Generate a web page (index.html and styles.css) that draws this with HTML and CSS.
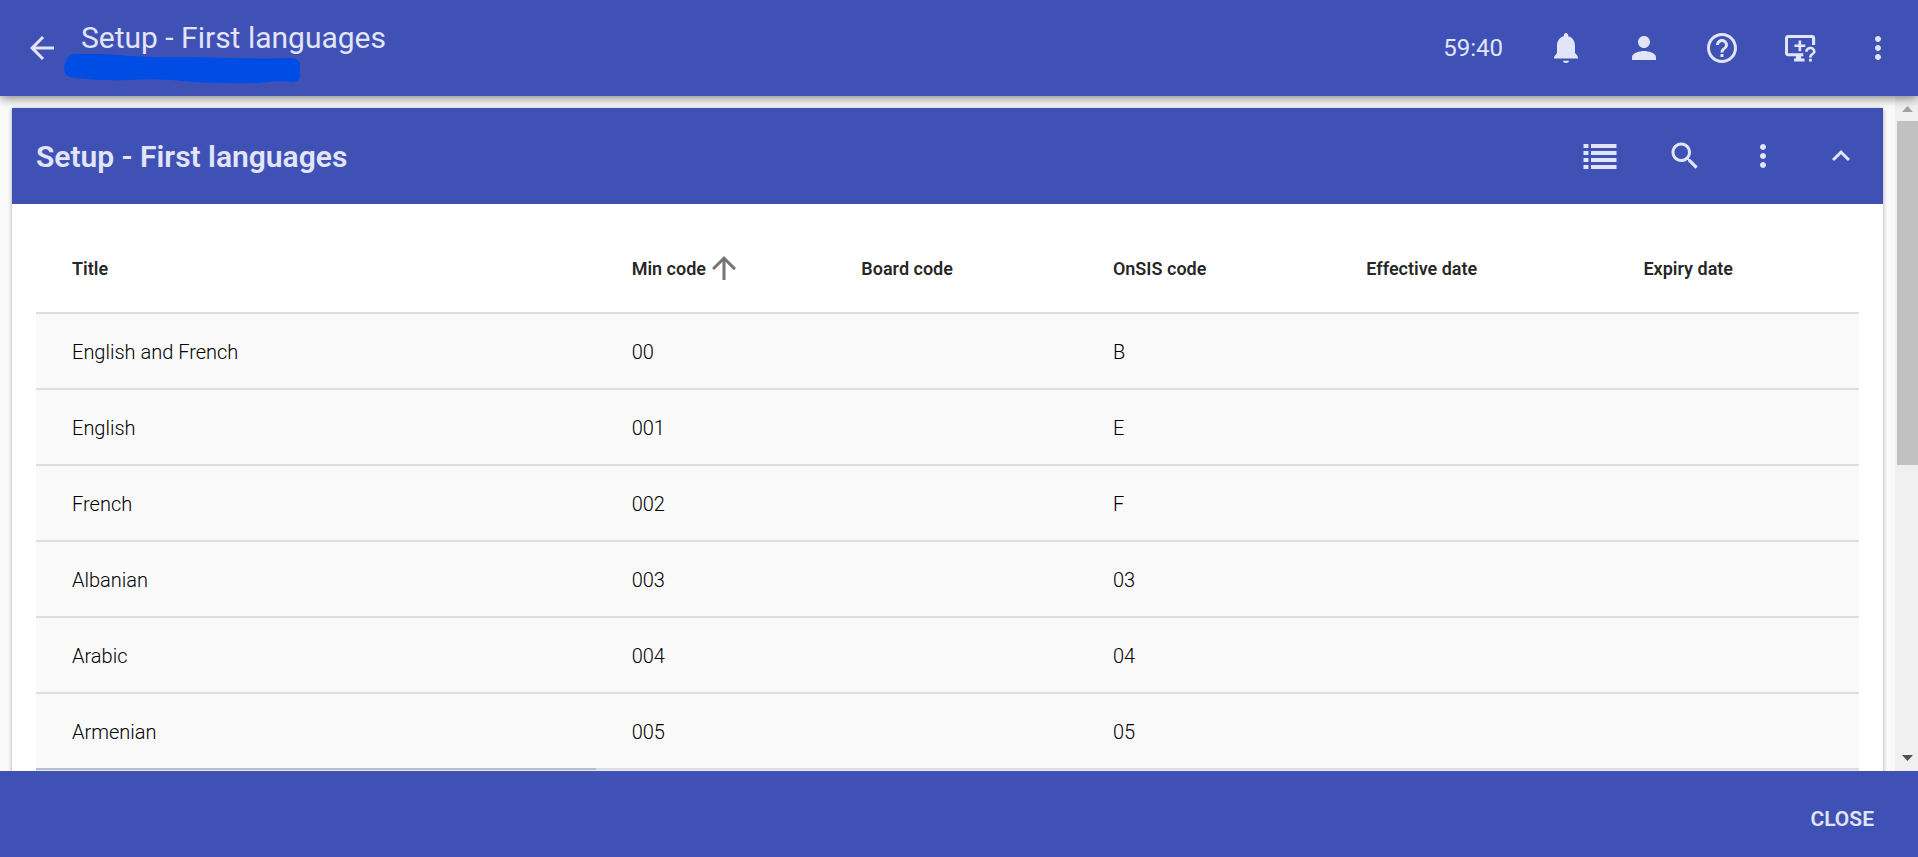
FILE: index.html
```html
<!DOCTYPE html>
<html lang="en">
<head>
<meta charset="utf-8">
<title>Setup - First languages</title>
<link rel="stylesheet" href="styles.css">
</head>
<body>
<header class="topbar">
  <button class="icon-btn" aria-label="Back"><svg viewBox="0 0 24 24"><path d="M20 11H7.83l5.59-5.59L12 4l-8 8 8 8 1.41-1.41L7.83 13H20z"/></svg></button>
  <div class="heading">
    <h1 class="page-title">Setup - First languages</h1>
    <svg class="marker" viewBox="0 0 238 30" aria-hidden="true"><path d="M10 0Q38-1 66 2Q100 4 130 3Q180 5 228 4Q236 5 236 12V21Q236 28 228 28Q212 26 196 29Q160 30 130 28Q96 24 66 26Q36 27 10 24Q0 23 0 14Q2 1 10 0z"/></svg>
  </div>
  <span class="timer">59:40</span>
  <nav class="actions" aria-label="Account">
    <button class="icon-btn" aria-label="Notifications"><svg viewBox="0 0 24 24"><path d="M12 22c1.100 0 2-.5 2-1.500h-4c0 1 .9 1.500 2 1.500zm7.500-4.500v-.5L18 15.300V10.500c0-3.100-1.600-5.600-4.500-6.300V3.500c0-.8-.7-1.500-1.500-1.500s-1.500.7-1.500 1.500v.7C7.600 4.900 6 7.400 6 10.500v4.800L4 18v1h16v-1z"/></svg></button>
    <button class="icon-btn" aria-label="Profile"><svg viewBox="0 0 24 24"><path d="M12 12c2.210 0 4-1.790 4-4s-1.790-4-4-4-4 1.790-4 4 1.790 4 4 4zm0 2c-2.670 0-8 1.340-8 4v2h16v-2c0-2.660-5.330-4-8-4z"/></svg></button>
    <button class="icon-btn" aria-label="Help"><svg viewBox="0 0 24 24"><path d="M11 18h2v-2h-2v2zm1-16C6.480 2 2 6.480 2 12s4.480 10 10 10 10-4.480 10-10S17.520 2 12 2zm0 18c-4.410 0-8-3.590-8-8s3.590-8 8-8 8 3.590 8 8-3.590 8-8 8zm0-14c-2.210 0-4 1.790-4 4h2c0-1.100.9-2 2-2s2 .9 2 2c0 2-3 1.750-3 5h2c0-2.250 3-2.500 3-5 0-2.210-1.790-4-4-4z"/></svg></button>
    <button class="icon-btn" aria-label="Remote support"><svg viewBox="0 0 24 24"><path d="M4 3.300h16.200c1.100 0 1.900.8 1.900 1.900V10H20V5.300H4V15.500h10.200v2H12.800v1.500h2.200v2H8v-2h1.300v-1.500H4c-1.100 0-2-.9-2-2V5.300c0-1.100.9-2 2-2z"/><path d="M11 7h1.800v2.600h2.700v1.800h-2.700v2.700H11v-2.700H8.300V9.600H11z"/><path d="M18 19.200h1.900V21H18zM15.400 14.500c0-2 1.500-3.400 3.500-3.400s3.500 1.400 3.500 3.300c0 2-2.500 2.100-2.500 4H18c0-2.700 2.600-2.700 2.600-4 0-.9-.7-1.500-1.700-1.500s-1.700.7-1.700 1.600z"/></svg></button>
    <button class="icon-btn" aria-label="More options"><svg viewBox="0 0 24 24"><path d="M12 8c1.100 0 2-.9 2-2s-.9-2-2-2-2 .9-2 2 .9 2 2 2zm0 2c-1.100 0-2 .9-2 2s.9 2 2 2 2-.9 2-2-.9-2-2-2zm0 6c-1.100 0-2 .9-2 2s.9 2 2 2 2-.9 2-2-.9-2-2-2z"/></svg></button>
  </nav>
</header>

<div class="body">
  <main class="content">
    <section class="card">
      <div class="card-head">
        <h2 class="card-title">Setup - First languages</h2>
        <div class="card-tools">
          <button class="icon-btn list-btn" aria-label="List view"><svg viewBox="0 0 24 24"><path d="M1 4h3.300v2.700H1zM6 4h17v2.700H6zM1 8.670h3.300v2.700H1zM6 8.670h17v2.700H6zM1 13.330h3.300v2.700H1zM6 13.330h17v2.700H6zM1 18h3.300v2.700H1zM6 18h17v2.700H6z"/></svg></button>
          <button class="icon-btn" aria-label="Search"><svg viewBox="0 0 24 24"><path d="M15.500 14h-.79l-.28-.27C15.410 12.590 16 11.110 16 9.500 16 5.910 13.090 3 9.500 3S3 5.910 3 9.500 5.910 16 9.500 16c1.610 0 3.090-.59 4.230-1.570l.27.28v.79l5 4.990L20.490 19l-4.990-5zm-6 0C7.010 14 5 11.990 5 9.500S7.010 5 9.500 5 14 7.010 14 9.500 11.990 14 9.500 14z"/></svg></button>
          <button class="icon-btn" aria-label="Table options"><svg viewBox="0 0 24 24"><path d="M12 8c1.100 0 2-.9 2-2s-.9-2-2-2-2 .9-2 2 .9 2 2 2zm0 2c-1.100 0-2 .9-2 2s.9 2 2 2 2-.9 2-2-.9-2-2-2zm0 6c-1.100 0-2 .9-2 2s.9 2 2 2 2-.9 2-2-.9-2-2-2z"/></svg></button>
          <button class="icon-btn" aria-label="Collapse"><svg viewBox="0 0 24 24"><path d="M12 8l-6 6 1.410 1.410L12 10.830l4.590 4.580L18 14z"/></svg></button>
        </div>
      </div>
      <div class="table-wrap">
        <table class="grid">
          <colgroup><col class="c-title"><col class="c-min"><col class="c-board"><col class="c-onsis"><col class="c-eff"><col></colgroup>
          <thead>
            <tr>
              <th scope="col">Title</th>
              <th scope="col" aria-sort="ascending"><span class="sorted">Min code<svg class="sort" viewBox="0 0 24 24" aria-hidden="true"><path d="M4 12l1.410 1.410L11 7.830V20h2V7.830l5.580 5.590L20 12l-8-8z"/></svg></span></th>
              <th scope="col">Board code</th>
              <th scope="col">OnSIS code</th>
              <th scope="col">Effective date</th>
              <th scope="col">Expiry date</th>
            </tr>
          </thead>
          <tbody>
            <tr><td>English and French</td><td>00</td><td></td><td>B</td><td></td><td></td></tr>
            <tr><td>English</td><td>001</td><td></td><td>E</td><td></td><td></td></tr>
            <tr><td>French</td><td>002</td><td></td><td>F</td><td></td><td></td></tr>
            <tr><td>Albanian</td><td>003</td><td></td><td>03</td><td></td><td></td></tr>
            <tr><td>Arabic</td><td>004</td><td></td><td>04</td><td></td><td></td></tr>
            <tr><td>Armenian</td><td>005</td><td></td><td>05</td><td></td><td></td></tr>
            <tr class="next"><td></td><td></td><td></td><td></td><td></td><td></td></tr>
          </tbody>
        </table>
      </div>
    </section>
  </main>
  <div class="scrollbar" aria-hidden="true">
    <svg class="scroll-arrow up" viewBox="0 0 23 25"><path d="M7 16h11l-5.500-6z"/></svg>
    <div class="track"><div class="thumb"></div></div>
    <svg class="scroll-arrow down" viewBox="0 0 23 25"><path d="M7 9h11l-5.500 6z"/></svg>
  </div>
</div>

<footer class="footer">
  <button class="close-btn">CLOSE</button>
</footer>
</body>
</html>
```

FILE: styles.css
```css
* {
  box-sizing: border-box;
}

body {
  margin: 0;
  height: 100vh;
  display: flex;
  flex-direction: column;
  overflow: hidden;
  background: #fafafa;
  color: rgba(0, 0, 0, 0.87);
  font-family: Roboto, "Liberation Sans", sans-serif;
  font-size: 20px;
}

h1,
h2 {
  margin: 0;
}

button {
  border: 0;
  padding: 0;
  background: none;
  color: inherit;
  font: inherit;
  cursor: pointer;
}

.topbar {
  flex: none;
  position: relative;
  z-index: 1;
  display: flex;
  align-items: center;
  height: 96px;
  padding: 0 10px 0 12px;
  background: #3f51b5;
  color: #e2e5f8;
  box-shadow: 0 2px 10px rgba(0, 0, 0, 0.5);
}

.icon-btn {
  flex: none;
  display: grid;
  place-items: center;
  width: 60px;
  height: 60px;
}

.icon-btn svg {
  width: 36px;
  height: 36px;
  fill: currentColor;
}

.heading {
  flex: 1;
  position: relative;
  padding: 0 0 20px 9px;
}

.page-title {
  font-size: 30px;
  line-height: 36px;
  font-weight: 400;
}

.marker {
  position: absolute;
  left: -8px;
  top: 34px;
  width: 238px;
  height: 30px;
  fill: #004de6;
}

.timer {
  font-size: 24px;
  margin-right: 33px;
}

.actions {
  display: flex;
  gap: 18px;
}

.body {
  flex: 1;
  min-height: 0;
  display: flex;
}

.content {
  flex: 1;
  min-width: 0;
  padding: 12px;
  overflow: hidden;
}

.card {
  background: #fff;
  box-shadow: 0 1px 4px rgba(0, 0, 0, 0.35);
}

.card-head {
  display: flex;
  align-items: center;
  justify-content: space-between;
  height: 96px;
  padding: 0 12px 0 24px;
  background: #3f51b5;
  color: #e2e5f8;
}

.card-title {
  font-size: 30px;
  font-weight: 600;
}

.card-tools {
  display: flex;
  gap: 18px;
}

.list-btn {
  margin-right: 7px;
}

.table-wrap {
  padding: 24px 24px 0;
}

.grid {
  width: 100%;
  table-layout: fixed;
  border-collapse: separate;
  border-spacing: 0;
}

.c-title { width: 30.7%; }
.c-min { width: 12.6%; }
.c-board { width: 13.8%; }
.c-onsis { width: 13.9%; }
.c-eff { width: 15.2%; }

.grid th {
  height: 84px;
  padding: 0 0 4px 36px;
  text-align: left;
  font-size: 18px;
  font-weight: 600;
  white-space: nowrap;
}

.grid td {
  height: 76px;
  padding: 2px 36px 0;
  border-top: 2px solid #dedede;
  background: #fafafa;
  color: #000;
  font-weight: 300;
}

.grid .next td {
  background: #e6e8f3;
}

.grid .next td:first-child {
  border-top-color: #b8bcc4;
}

.sorted {
  display: flex;
  align-items: center;
}

.sort {
  width: 36px;
  height: 36px;
  fill: #757575;
}

.scrollbar {
  flex: none;
  display: flex;
  flex-direction: column;
  width: 23px;
  background: #f0f0f0;
}

.scroll-arrow {
  flex: none;
  width: 23px;
  height: 25px;
}

.up {
  fill: #a3a3a3;
}

.down {
  fill: #505050;
}

.track {
  flex: 1;
  padding-left: 2px;
}

.thumb {
  height: 55%;
  background: #c1c1c1;
}

.footer {
  flex: none;
  display: flex;
  align-items: center;
  justify-content: flex-end;
  height: 86px;
  padding: 10px 44px 0;
  background: #3f51b5;
  color: #e2e5f8;
}

.close-btn {
  height: 54px;
  font-size: 21px;
  font-weight: 600;
}
```
